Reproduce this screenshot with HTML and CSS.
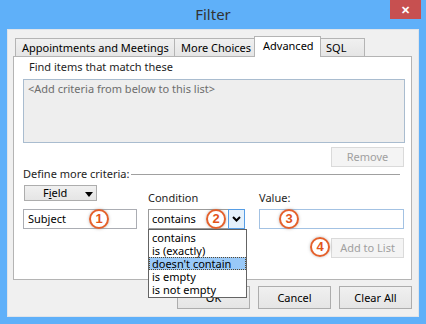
FILE: index.html
```html
<!DOCTYPE html>
<html>
	<head>
		<meta charset="UTF-8">
		<title>Filter</title>
		<link rel="stylesheet" href="styles.css">
	</head>
	<body>
		<div class="titlebar">
			<span class="title">Filter</span>
			<span class="close">&#x2715;</span>
		</div>
		<div class="client">
			<div class="tabs">
				<div class="tab tab-appt">Appointments and Meetings</div>
				<div class="tab tab-more">More Choices</div>
				<div class="tab tab-adv active">Advanced</div>
				<div class="tab tab-sql">SQL</div>
			</div>
			<div class="panel">
				<div class="find-label">Find items that match these</div>
				<div class="criteria-list">&lt;Add criteria from below to this list&gt;</div>
				<div class="btn-row">
					<div class="btn disabled">Remove</div>
				</div>
				<div class="group-title">
					<span>Define more criteria:</span>
					<span class="rule"></span>
				</div>
				<div class="criteria">
					<div class="field-btn">F<u>i</u>eld <span class="tri"></span></div>
					<div class="lbl lbl-cond">Condition</div>
					<div class="lbl lbl-val">Value:</div>

					<div class="input input-subject">Subject<span class="badge b1">1</span></div>
					<div class="combo">
						<span class="combo-text">contains</span>
						<span class="badge b2">2</span>
						<span class="combo-btn">
							<svg width="9" height="6" viewBox="0 0 9 6"><path d="M1 1 L4.5 4.5 L8 1" fill="none" stroke="#000" stroke-width="2"/></svg>
						</span>
						<ul class="dropdown">
							<li>contains</li>
							<li>is (exactly)</li>
							<li class="selected">doesn't contain</li>
							<li>is empty</li>
							<li>is not empty</li>
						</ul>
					</div>
					<div class="input input-value"><span class="badge b3">3</span></div>

					<div class="btn disabled add-btn">Add to List<span class="badge b4">4</span></div>
				</div>
			</div>
			<div class="footer">
				<div class="btn">OK</div>
				<div class="btn">Cancel</div>
				<div class="btn">Clear All</div>
			</div>
		</div>
	</body>
</html>
```

FILE: styles.css
```css
*{
	padding: 0;
	margin: 0;
	box-sizing: border-box;
}
body{
	width: 426px;
	height: 324px;
	overflow: hidden;
	background: #5fb0f9;
	font-size: 11px;
	font-family: "Noto Sans", "Liberation Sans", sans-serif;
	color: #000;
}
ul,li{
	list-style: none;
}
.titlebar {
	position: relative;
	height: 29px;
	text-align: center;
}
.title {
	font-size: 15px;
	line-height: 28px;
	color: #333;
}
.close {
	position: absolute;
	right: 5px;
	top: 0;
	width: 31px;
	height: 19px;
	line-height: 19px;
	background: #c75050;
	color: #fff;
	font-size: 11px;
	font-weight: bold;
	text-align: center;
}
.client {
	width: 412px;
	height: 288px;
	margin-left: 7px;
	padding: 6px 6px 0 5px;
	background: #f0f0f0;
	border: 1px solid #dfe4ea;
}
/* tabs */
.tabs {
	display: flex;
	align-items: flex-end;
	height: 20px;
	padding-left: 2px;
}
.tab {
	height: 18px;
	line-height: 17px;
	padding-left: 6px;
	border: 1px solid #b4b4b4;
	border-bottom: none;
	background: linear-gradient(#f0f0f0, #e5e5e5);
	white-space: nowrap;
	margin-left: -1px;
}
.tab-appt { width: 160px; margin-left: 0; }
.tab-more { width: 81px; }
.tab-adv { width: 67px; padding-left: 8px; }
.tab-sql { width: 45px; padding-left: 5px; }
.tab.active {
	position: relative;
	z-index: 1;
	height: 21px;
	margin-bottom: -1px;
	line-height: 18px;
	background: #fff;
}
.panel {
	height: 224px;
	padding: 0 6px 0 9px;
	background: #fff;
	border: 1px solid #b4b4b4;
}
.find-label {
	margin-top: 2px;
	padding-left: 6px;
	line-height: 16px;
	color: #1e1e1e;
}
.criteria-list {
	height: 64px;
	margin-top: 4px;
	padding: 1px 4px;
	line-height: 16px;
	background: #eeeeee;
	border: 1px solid #a9bccf;
	color: #6d6d6d;
}
.btn-row {
	display: flex;
	justify-content: flex-end;
	margin-top: 4px;
	padding-right: 1px;
}
.btn {
	width: 73px;
	height: 20px;
	line-height: 18px;
	text-align: center;
	border: 1px solid #adadad;
	background: linear-gradient(#f0f0f0, #e5e5e5);
}
.btn.disabled {
	border-color: #dadada;
	background: #f4f4f4;
	color: #a0a0a0;
}
.group-title {
	display: flex;
	align-items: center;
	line-height: 14px;
	color: #1e1e1e;
}
.rule {
	flex: 1;
	height: 1px;
	margin: 1px 5px 0 2px;
	background: #a0a0a0;
}
/* criteria area */
.criteria {
	display: grid;
	grid-template-columns: 114px 11px 97px 14px 146px;
	grid-template-rows: 24px 20px auto;
	margin-top: 4px;
}
.field-btn {
	grid-column: 1;
	width: 73px;
	height: 16px;
	margin-left: 1px;
	line-height: 14px;
	padding-left: 18px;
	border: 1px solid #adadad;
	background: linear-gradient(#f0f0f0, #e5e5e5);
}
.tri {
	display: inline-block;
	margin-left: 15px;
	vertical-align: middle;
	border-left: 4px solid transparent;
	border-right: 4px solid transparent;
	border-top: 5px solid #000;
}
.lbl {
	padding-top: 6px;
	line-height: 14px;
	color: #1e1e1e;
}
.lbl-cond { grid-column: 3; }
.lbl-val { grid-column: 5; }
.input {
	position: relative;
	height: 20px;
	line-height: 18px;
	padding-left: 4px;
	border: 1px solid #abadb3;
	background: #fff;
}
.input-subject { grid-column: 1; }
.input-value {
	grid-column: 5;
	margin-right: 1px;
	border-color: #a3c2e3;
}
.combo {
	grid-column: 3;
	position: relative;
	height: 20px;
	line-height: 18px;
	padding-left: 3px;
	border: 1px solid #9b9b9b;
	border-right: none;
	background: #fff;
}
.combo-btn {
	position: absolute;
	right: 0;
	top: -1px;
	width: 17px;
	height: 20px;
	display: flex;
	align-items: center;
	justify-content: center;
	border: 1px solid #569de5;
	background: #e5f1fb;
}
.dropdown {
	position: absolute;
	z-index: 5;
	left: -1px;
	top: 19px;
	width: 99px;
	padding: 1px 0;
	border: 1px solid #646464;
	background: #fff;
}
.dropdown li {
	height: 13px;
	padding-left: 3px;
	line-height: 13px;
	white-space: nowrap;
}
.dropdown li.selected {
	background: #99c9f8;
	outline: 1px dotted #5a4a30;
	outline-offset: -1px;
}
.add-btn {
	grid-column: 5;
	grid-row: 3;
	justify-self: end;
	position: relative;
	margin: 9px 1px 0 0;
}
/* numbered callouts */
.badge {
	position: absolute;
	top: -1px;
	width: 20px;
	height: 20px;
	border: 2px solid #e4612c;
	border-radius: 50%;
	background: rgba(255,255,255,0.7);
	box-shadow: 0 0 3px rgba(120,120,120,0.5);
	color: #e2541a;
	font: bold 13px/16px "Liberation Sans", sans-serif;
	text-align: center;
}
.b1 { left: 65px; }
.b2 { left: 57px; }
.b3 { left: 19px; }
.b4 { left: -22px; top: -2px; }
.footer {
	display: flex;
	justify-content: flex-end;
	gap: 8px;
	margin-top: 6px;
}
.footer .btn {
	height: 23px;
	line-height: 21px;
	border-color: #adadad;
	background: linear-gradient(#f0f0f0, #e5e5e5);
}
```
